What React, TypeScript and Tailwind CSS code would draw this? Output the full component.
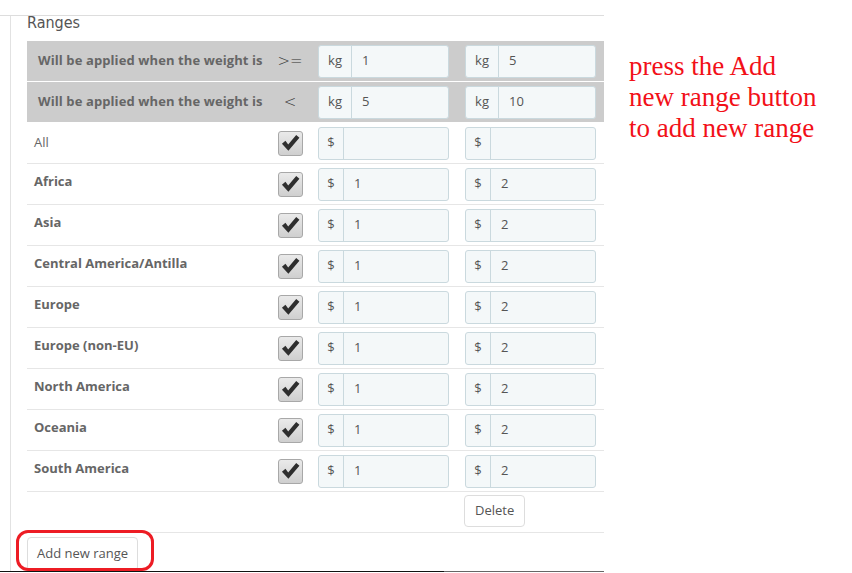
import React from 'react';

const zones = [
  'Africa',
  'Asia',
  'Central America/Antilla',
  'Europe',
  'Europe (non-EU)',
  'North America',
  'Oceania',
  'South America',
];

interface AddonInputProps {
  addon: string;
  value: string;
}

const AddonInput: React.FC<AddonInputProps> = ({ addon, value }) => {
  const wide = addon === 'kg';
  return (
    <div className="flex h-[33px] w-full rounded-[3px] border border-[#cad9de] bg-[#f4f8f9] text-[13px] text-[#555]">
      <span
        className={`${wide ? 'w-[33px]' : 'w-[25px]'} flex items-center justify-center border-r border-[#cad9de]`}
      >
        {addon}
      </span>
      <span className="flex flex-1 items-center pl-[10px]">{value}</span>
    </div>
  );
};

const Checkbox = () => (
  <div className="flex h-[25px] w-[25px] items-center justify-center rounded-[3px] border border-[#a8a8a8] bg-gradient-to-b from-[#eaeaea] to-[#cfcfcf]">
    <svg width="24" height="24" viewBox="0 0 25 25">
      <path d="M3.2 13.4 L7 10 L10 14 L18.7 3.8 L22.2 6.8 L10.2 21 Z" fill="#2e2e2e" />
    </svg>
  </div>
);

const HeaderRow: React.FC<{ sign: string; from: string; to: string }> = ({ sign, from, to }) => (
  <div className="flex h-[41px] shrink-0 border-b border-white bg-[#cccccc]">
    <div className="flex w-[243px] items-center pl-[11px] text-[13px] font-bold tracking-[0.1px] text-[#666]">
      Will be applied when the weight is
    </div>
    <div className="flex w-[40px] items-center justify-center font-['DejaVu_Sans',sans-serif] text-[15px] font-extralight text-[#333]">
      {sign}
    </div>
    <div className="flex w-[147px] items-center px-[8px]">
      <AddonInput addon="kg" value={from} />
    </div>
    <div className="flex w-[147px] items-center px-[8px]">
      <AddonInput addon="kg" value={to} />
    </div>
  </div>
);

const ZoneRow: React.FC<{ name: string; first: string; second: string; all?: boolean }> = ({
  name,
  first,
  second,
  all,
}) => (
  <div className="flex h-[41px] shrink-0 border-b border-[#e6e6e6]">
    <div
      className={`flex w-[243px] pl-[7px] text-[13px] text-[#666] ${
        all ? 'items-center' : 'items-start pt-[8px] font-bold'
      }`}
    >
      {name}
    </div>
    <div className="flex w-[40px] items-center justify-center">
      <Checkbox />
    </div>
    <div className="flex w-[147px] items-center px-[8px]">
      <AddonInput addon="$" value={first} />
    </div>
    <div className="flex w-[147px] items-center px-[8px]">
      <AddonInput addon="$" value={second} />
    </div>
  </div>
);

export default function App() {
  return (
    <div className="relative flex h-[573px] w-[852px] overflow-hidden bg-white font-['Open_Sans',sans-serif]">
      {/* Left panel */}
      <div className="flex w-[604px] flex-col">
        <div className="h-[16px] shrink-0 border-b border-[#dddddd]" />
        <div className="flex h-[555px] shrink-0">
          <div className="w-[11px] shrink-0 border-r border-[#e2e2e2]" />
          <div className="flex flex-1 flex-col pl-[16px]">
            <div className="-mt-[2px] h-[27px] shrink-0 font-['Liberation_Sans_Narrow','DejaVu_Sans_Condensed',sans-serif] text-[16px] leading-[18px] text-[#555]">
              Ranges
            </div>

            <HeaderRow sign=">=" from="1" to="5" />
            <HeaderRow sign="<" from="5" to="10" />

            <ZoneRow name="All" first="" second="" all />
            {zones.map((z) => (
              <ZoneRow key={z} name={z} first="1" second="2" />
            ))}

            {/* Delete row */}
            <div className="flex h-[41px] shrink-0 border-b border-[#e6e6e6]">
              <div className="w-[430px]" />
              <div className="flex w-[147px] items-start px-[7px] pt-[3px]">
                <button className="h-[32px] rounded-[4px] border border-[#dddddd] bg-white px-[10px] text-[13px] text-[#555]">
                  Delete
                </button>
              </div>
            </div>

            <div className="mt-[4px] shrink-0">
              <button className="h-[34px] rounded-[4px] border border-[#dddddd] bg-white px-[9px] text-[13px] text-[#555]">
                Add new range
              </button>
            </div>
          </div>
        </div>
        <div className="flex h-px shrink-0">
          <div className="w-[444px] bg-[#111]" />
          <div className="flex-1 bg-[#666]" />
        </div>
      </div>

      {/* Annotation */}
      <div className="flex-1 pl-[25px] pt-[51px] font-['Liberation_Serif',serif] text-[27px] leading-[31px] text-[#f21018]">
        press the Add
        <br />
        new range button
        <br />
        to add new range
      </div>

      {/* Red highlight around the button */}
      <div className="absolute left-[16px] top-[530px] h-[41px] w-[138px] rounded-[12px] border-[3px] border-[#ed1c24]" />
    </div>
  );
}
